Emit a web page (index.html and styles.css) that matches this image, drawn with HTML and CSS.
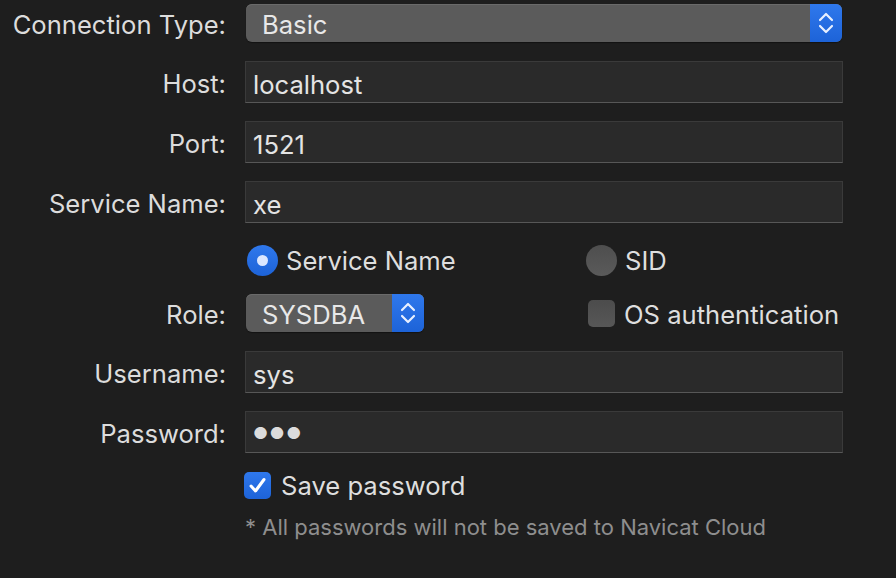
FILE: index.html
```html
<!DOCTYPE html>
<html>
<head>
<meta charset="utf-8">
<link rel="stylesheet" href="styles.css">
</head>
<body>
<div class="form">
  <div class="row r-popup">
    <div class="label">Connection Type:</div>
    <div class="popup wide">
      <span class="popup-text">Basic</span>
      <span class="stepper">
        <svg width="20" height="28" viewBox="0 0 20 28"><path d="M4 11 L10 5 L16 11" fill="none" stroke="#e8f0ff" stroke-width="2.2" stroke-linecap="round" stroke-linejoin="round"/><path d="M4 17 L10 23 L16 17" fill="none" stroke="#e8f0ff" stroke-width="2.2" stroke-linecap="round" stroke-linejoin="round"/></svg>
      </span>
    </div>
  </div>
  <div class="row r-field first-field">
    <div class="label">Host:</div>
    <div class="field">localhost</div>
  </div>
  <div class="row r-field">
    <div class="label">Port:</div>
    <div class="field">1521</div>
  </div>
  <div class="row r-field">
    <div class="label">Service Name:</div>
    <div class="field">xe</div>
  </div>
  <div class="row r-radio">
    <div class="label"></div>
    <div class="split">
      <div class="opt"><span class="radio on"><span class="dot"></span></span><span class="t">Service Name</span></div>
      <div class="opt right"><span class="radio"></span><span class="t">SID</span></div>
    </div>
  </div>
  <div class="row r-role">
    <div class="label">Role:</div>
    <div class="split">
      <div class="popup small">
        <span class="popup-text">SYSDBA</span>
        <span class="stepper">
          <svg width="20" height="28" viewBox="0 0 20 28"><path d="M4 11 L10 5 L16 11" fill="none" stroke="#e8f0ff" stroke-width="2.2" stroke-linecap="round" stroke-linejoin="round"/><path d="M4 17 L10 23 L16 17" fill="none" stroke="#e8f0ff" stroke-width="2.2" stroke-linecap="round" stroke-linejoin="round"/></svg>
        </span>
      </div>
      <div class="opt right os"><span class="check"></span><span class="t">OS authentication</span></div>
    </div>
  </div>
  <div class="row r-field user-field">
    <div class="label">Username:</div>
    <div class="field">sys</div>
  </div>
  <div class="row r-field">
    <div class="label">Password:</div>
    <div class="field pw">●●●</div>
  </div>
  <div class="row r-save">
    <div class="label"></div>
    <div class="opt save"><span class="check on">
      <svg width="27" height="27" viewBox="0 0 27 27"><path d="M7 14 L11.5 19 L20 7.5" fill="none" stroke="#ffffff" stroke-width="3" stroke-linecap="round" stroke-linejoin="round"/></svg>
    </span><span class="t">Save password</span></div>
  </div>
  <div class="row r-note">
    <div class="label"></div>
    <div class="note">* All passwords will not be saved to Navicat Cloud</div>
  </div>
</div>
</body>
</html>
```

FILE: styles.css
```css
html, body {
  margin: 0;
  padding: 0;
  background: #1e1e1e;
  width: 896px;
  height: 578px;
  overflow: hidden;
}
body {
  font-family: Inter, "Liberation Sans", sans-serif;
  font-size: 25.6px;
  color: #dedede;
}
.form {
  display: flex;
  flex-direction: column;
  padding-top: 4px;
}
.row {
  display: grid;
  grid-template-columns: 226px 598px;
  column-gap: 19px;
  align-items: center;
}
.label {
  text-align: right;
  color: #dcdcdc;
  white-space: nowrap;
  padding-top: 3px;
}
.r-popup { height: 38px; }
.r-field { height: 42px; margin-top: 18px; }
.first-field { margin-top: 19px; }
.r-radio { height: 34px; margin-top: 20px; }
.r-role { height: 38px; margin-top: 17px; }
.user-field { margin-top: 19px; }
.r-save { height: 27px; margin-top: 17px; }
.r-note { height: 24px; margin-top: 17px; }

.popup {
  display: flex;
  align-items: center;
  height: 38px;
  background: #5b5b5b;
  border-radius: 6px;
  margin-left: 1px;
  box-sizing: border-box;
  box-shadow: inset 0 1px 0 #6a6a6a, 0 1px 1px rgba(0,0,0,0.4);
  overflow: hidden;
}
.popup.wide { width: 596px; }
.popup.small { width: 178px; }
.popup-text {
  flex: 1;
  padding-left: 16px;
  padding-top: 3px;
  color: #e8e8e8;
}
.stepper {
  width: 32px;
  height: 38px;
  background: linear-gradient(#2f78ec, #1d63d8);
  display: flex;
  align-items: center;
  justify-content: center;
}
.field {
  height: 42px;
  box-sizing: border-box;
  background: #2a2a2a;
  border: 1px solid #3a3a3a;
  border-bottom-color: #575757;
  padding-left: 7px;
  padding-top: 4px;
  display: flex;
  align-items: center;
  color: #e4e4e4;
}
.field.pw {
  font-size: 16.5px;
  letter-spacing: 1.5px;
  padding-top: 2px;
  color: #dcdcdc;
}
.split {
  display: flex;
  align-items: center;
}
.opt {
  display: flex;
  align-items: center;
  gap: 8px;
  color: #dedede;
  white-space: nowrap;
}
.t { padding-top: 1px; }
.r-radio .opt:first-child { margin-left: 2px; width: 339px; }
.r-role .popup { margin-right: 165px; }
.r-role .t { padding-top: 3px; }
.os { margin-left: -1px; gap: 9px; }
.radio {
  width: 31px;
  height: 31px;
  border-radius: 50%;
  background: linear-gradient(#4e4e4e, #5a5a5a);
  box-sizing: border-box;
  display: flex;
  align-items: center;
  justify-content: center;
}
.radio.on {
  background: linear-gradient(#2f78ec, #1d63d8);
}
.dot {
  width: 11px;
  height: 11px;
  border-radius: 50%;
  background: #dbe7ff;
}
.check {
  width: 27px;
  height: 27px;
  border-radius: 5px;
  background: linear-gradient(#4c4c4c, #575757);
  display: flex;
  align-items: center;
  justify-content: center;
}
.check.on {
  background: linear-gradient(#2f78ec, #1d63d8);
}
.save { margin-left: -1px; gap: 10px; }
.save .t { padding-top: 0; }
.note {
  font-size: 22px;
  color: #8e8e8e;
  white-space: nowrap;
}
```
